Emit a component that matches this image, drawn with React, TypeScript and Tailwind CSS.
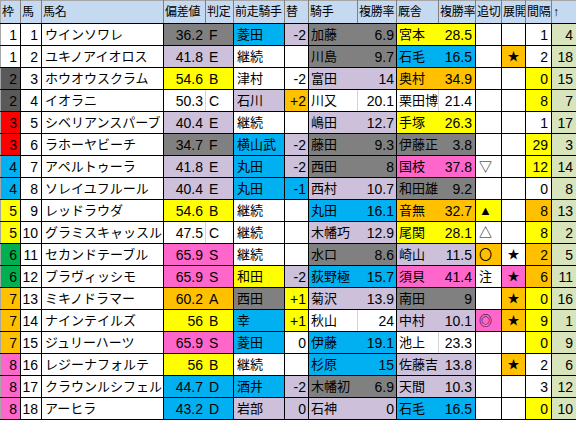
import React from 'react';

type Row = {
  waku: string;
  no: number;
  name: string;
  hensa: string;
  hantei: string;
  hc: string;
  zenso: string;
  zc: string;
  kae: string;
  kc: string;
  jockey: string;
  jrate: string;
  jc: string;
  trainer: string;
  trate: string;
  tc: string;
  oikiri: string;
  oc: string;
  tenkai: string;
  tec: string;
  kankaku: string;
  kac: string;
  up: string;
};

const BG: Record<string, string> = {
  W: 'bg-white',
  G: 'bg-[#808080]',
  L: 'bg-[#ccc0da]',
  Y: 'bg-[#ffff00]',
  B: 'bg-[#00b0f0]',
  O: 'bg-[#ffc000]',
  P: 'bg-[#ff66cc]',
  R: 'bg-[#ff0000]',
  N: 'bg-[#00b050]',
  D: 'bg-[#595959]',
  U: 'bg-[#d8e4bc]',
};

// split line between paired cells: light grid on white, hidden on colours
const INNER: Record<string, string> = {
  W: 'border-r-[#d4d4d4]',
  G: 'border-r-[#808080]',
  L: 'border-r-[#ccc0da]',
  Y: 'border-r-[#ffff00]',
  B: 'border-r-[#00b0f0]',
  O: 'border-r-[#ffc000]',
  P: 'border-r-[#ff66cc]',
};

const WAKU: Record<string, string> = {
  '1': 'W', '2': 'D', '3': 'R', '4': 'B', '5': 'Y', '6': 'N', '7': 'O', '8': 'P',
};

const r = (
  waku: string, no: number, name: string,
  hensa: string, hantei: string, hc: string,
  zenso: string, zc: string, kae: string, kc: string,
  jockey: string, jrate: string, jc: string,
  trainer: string, trate: string, tc: string,
  oikiri: string, oc: string, tenkai: string, tec: string,
  kankaku: string, kac: string, up: string,
): Row => ({ waku, no, name, hensa, hantei, hc, zenso, zc, kae, kc, jockey, jrate, jc, trainer, trate, tc, oikiri, oc, tenkai, tec, kankaku, kac, up });

const rows: Row[] = [
  r('1', 1, 'ウインソワレ', '36.2', 'F', 'G', '菱田', 'B', '-2', 'L', '加藤', '6.9', 'G', '宮本', '28.5', 'Y', '', 'W', '', 'W', '1', 'W', '4'),
  r('1', 2, 'ユキノアイオロス', '41.8', 'E', 'L', '継続', 'W', '', 'W', '川島', '9.7', 'G', '石毛', '16.5', 'B', '', 'W', '★', 'O', '2', 'W', '18'),
  r('2', 3, 'ホウオウスクラム', '54.6', 'B', 'Y', '津村', 'W', '-2', 'W', '富田', '14', 'L', '奥村', '34.9', 'O', '', 'W', '', 'W', '0', 'Y', '15'),
  r('2', 4, 'イオラニ', '50.3', 'C', 'W', '石川', 'L', '+2', 'O', '川又', '20.1', 'W', '栗田博', '21.4', 'W', '', 'W', '', 'W', '8', 'Y', '7'),
  r('3', 5, 'シベリアンスパーブ', '40.4', 'E', 'L', '継続', 'W', '', 'W', '嶋田', '12.7', 'L', '手塚', '26.3', 'Y', '', 'W', '', 'W', '1', 'W', '17'),
  r('3', 6, 'ラホーヤビーチ', '34.7', 'F', 'G', '横山武', 'B', '-2', 'L', '藤田', '9.3', 'G', '伊藤正', '3.8', 'G', '', 'W', '', 'W', '29', 'Y', '3'),
  r('4', 7, 'アペルトゥーラ', '41.8', 'E', 'L', '丸田', 'B', '-2', 'L', '西田', '8', 'G', '国枝', '37.8', 'P', '▽', 'W', '', 'W', '12', 'Y', '14'),
  r('4', 8, 'ソレイユフルール', '40.4', 'E', 'L', '丸田', 'B', '-1', 'B', '西村', '10.7', 'L', '和田雄', '9.2', 'G', '', 'W', '', 'W', '0', 'W', '8'),
  r('5', 9, 'レッドラウダ', '54.6', 'B', 'Y', '継続', 'W', '', 'W', '丸田', '16.1', 'B', '音無', '32.7', 'O', '▲', 'Y', '', 'W', '8', 'O', '13'),
  r('5', 10, 'グラミスキャッスル', '47.5', 'C', 'W', '継続', 'W', '', 'W', '木幡巧', '12.9', 'L', '尾関', '28.1', 'Y', '△', 'W', '', 'W', '8', 'Y', '2'),
  r('6', 11, 'セカンドテーブル', '65.9', 'S', 'P', '継続', 'W', '', 'W', '水口', '8.6', 'G', '崎山', '11.5', 'L', '〇', 'O', '★', 'W', '2', 'O', '5'),
  r('6', 12, 'ブラヴィッシモ', '65.9', 'S', 'P', '和田', 'Y', '-2', 'L', '荻野極', '15.7', 'B', '須貝', '41.4', 'P', '注', 'W', '★', 'P', '6', 'O', '11'),
  r('7', 13, 'ミキノドラマー', '60.2', 'A', 'O', '西田', 'G', '+1', 'Y', '菊沢', '13.9', 'L', '南田', '9', 'G', '', 'W', '★', 'O', '0', 'Y', '16'),
  r('7', 14, 'ナインテイルズ', '56', 'B', 'Y', '幸', 'B', '+1', 'Y', '秋山', '24', 'W', '中村', '10.1', 'L', '◎', 'P', '★', 'O', '9', 'Y', '1'),
  r('7', 15, 'ジュリーハーツ', '65.9', 'S', 'P', '菱田', 'B', '0', 'W', '伊藤', '19.1', 'B', '池上', '23.3', 'W', '', 'W', '', 'W', '0', 'Y', '9'),
  r('8', 16, 'レジーナフォルテ', '56', 'B', 'Y', '継続', 'W', '', 'W', '杉原', '15', 'B', '佐藤吉', '13.8', 'L', '', 'W', '★', 'O', '2', 'W', '6'),
  r('8', 17, 'クラウンルシフェル', '44.7', 'D', 'B', '酒井', 'B', '-2', 'L', '木幡初', '6.9', 'G', '天間', '10.3', 'L', '', 'W', '', 'W', '3', 'W', '12'),
  r('8', 18, 'アーヒラ', '43.2', 'D', 'B', '岩部', 'L', '0', 'L', '石神', '0', 'L', '石毛', '16.5', 'B', '', 'W', '', 'W', '0', 'Y', '10'),
];

const widths = [20, 21, 122, 42, 28, 51, 24, 49, 39, 42, 37, 26, 24, 26, 25];
const headers = ['枠', '馬', '馬名', '偏差値', '判定', '前走騎手', '替', '騎手', '複勝率', '厩舎', '複勝率', '追切', '展開', '間隔', '↑'];

const cell = 'h-[22px] p-0 border-b border-b-black border-r whitespace-nowrap overflow-hidden leading-none';
const num = 'text-[14px]';
const blk = 'border-r-black';

const App: React.FC = () => {
  return (
    <div className="w-[576px] h-[423px] overflow-hidden bg-white text-black text-[13px] font-['Liberation_Sans','Noto_Sans_CJK_JP',sans-serif]">
      <table className="table-fixed border-collapse w-[576px]">
        <colgroup>
          {widths.map((w, i) => (
            <col key={i} style={{ width: w }} />
          ))}
        </colgroup>
        <thead>
          <tr>
            {headers.map((h, i) => (
              <th
                key={i}
                className={`h-[23px] p-0 pl-[1px] bg-[#c5d9f1] border-t border-t-[#a6a6a6] border-b border-b-black border-r border-r-[#7f7f7f] text-left font-normal text-[12px] tracking-[-0.3px] whitespace-nowrap overflow-hidden ${i === 0 ? 'border-l border-l-[#a6a6a6]' : ''}`}
              >
                {h}
              </th>
            ))}
          </tr>
        </thead>
        <tbody>
          {rows.map((d) => (
            <tr key={d.no}>
              <td className={`${cell} ${blk} ${num} border-l border-l-[#a6a6a6] text-right pr-[3px] ${BG[WAKU[d.waku]]}`}>{d.waku}</td>
              <td className={`${cell} ${blk} ${num} text-right pr-[3px] bg-white`}>{d.no}</td>
              <td className={`${cell} ${blk} pl-[3px] bg-white`}>{d.name}</td>
              <td className={`${cell} ${INNER[d.hc]} ${num} text-right pr-[2px] ${BG[d.hc]}`}>{d.hensa}</td>
              <td className={`${cell} ${blk} ${num} pl-[3px] ${BG[d.hc]}`}>{d.hantei}</td>
              <td className={`${cell} ${blk} pl-[3px] ${BG[d.zc]}`}>{d.zenso}</td>
              <td className={`${cell} ${blk} ${num} text-right pr-[2px] ${BG[d.kc]}`}>{d.kae}</td>
              <td className={`${cell} ${INNER[d.jc]} pl-[2px] ${BG[d.jc]}`}>{d.jockey}</td>
              <td className={`${cell} ${blk} ${num} text-right pr-[2px] ${BG[d.jc]}`}>{d.jrate}</td>
              <td className={`${cell} ${INNER[d.tc]} pl-[2px] ${BG[d.tc]}`}>{d.trainer}</td>
              <td className={`${cell} ${blk} ${num} text-right pr-[3px] ${BG[d.tc]}`}>{d.trate}</td>
              <td className={`${cell} ${blk} pl-[3px] ${BG[d.oc]}`}>{d.oikiri}</td>
              <td className={`${cell} ${blk} text-center text-[12px] ${BG[d.tec]}`}>{d.tenkai}</td>
              <td className={`${cell} ${blk} ${num} text-right pr-[3px] ${BG[d.kac]}`}>{d.kankaku}</td>
              <td className={`${cell} ${blk} ${num} text-right pr-[3px] ${BG.U}`}>{d.up}</td>
            </tr>
          ))}
        </tbody>
      </table>
    </div>
  );
};

export default App;
